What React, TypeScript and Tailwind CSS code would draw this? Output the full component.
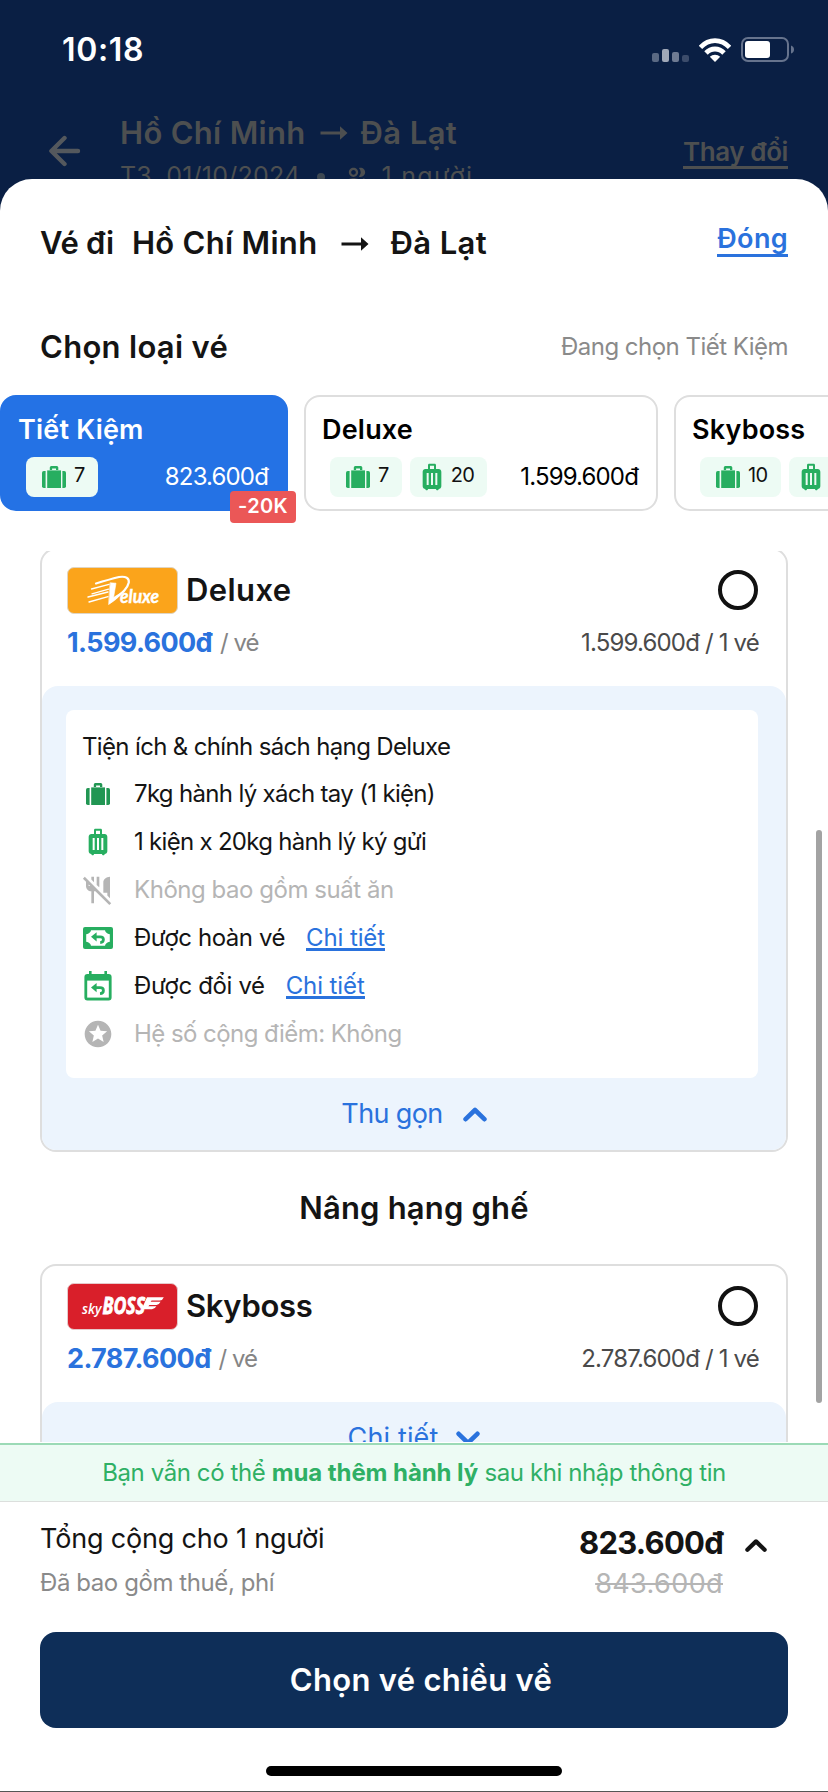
import type { ReactNode } from "react";
import { MdLuggage, MdNoMeals, MdOutlinePeopleAlt, MdStars } from "react-icons/md";

function RouteArrow() {
  return (
    <svg width="28" height="14" viewBox="0 0 28 14" fill="currentColor">
      <path d="M0.5 5.6H20V0.3L27.5 7L20 13.7V8.6H0.5Z" />
    </svg>
  );
}

function Chevron({ up = false, small = false }: { up?: boolean; small?: boolean }) {
  return (
    <svg
      width={small ? 22 : 24}
      height="15"
      viewBox="0 0 24 15"
      fill="none"
      stroke="currentColor"
      strokeWidth="4.6"
      strokeLinecap="round"
      strokeLinejoin="round"
    >
      <path d={up ? "M2.6 12.2L12 3L21.4 12.2" : "M2.6 2.8L12 12L21.4 2.8"} />
    </svg>
  );
}

function Suitcase() {
  return (
    <svg width="24" height="22" viewBox="0 0 24 22" fill="currentColor">
      <path d="M7.8 4V1.5Q7.8 0 9.3 0H14.8Q16.3 0 16.3 1.5V4H14V2.4H10.1V4Z" />
      <path d="M3.6 5V22H1.8Q0 22 0 20.2V6.8Q0 5 1.8 5Z" />
      <rect x="5.2" y="4.4" width="13.8" height="17.6" />
      <path d="M20.4 5H22.2Q24 5 24 6.8V20.2Q24 22 22.2 22H20.4Z" />
    </svg>
  );
}

function Refund() {
  return (
    <svg width="30" height="22" viewBox="0 0 30 22">
      <rect width="30" height="22" rx="2" fill="#27ae60" />
      <path
        d="M8 3.2H22Q22.6 6.4 26.8 7.2V14.8Q22.6 15.6 22 18.8H8Q7.4 15.6 3.2 14.8V7.2Q7.4 6.4 8 3.2Z"
        fill="#fff"
      />
      <path d="M8 9.8L13.6 5.2V14.4Z" fill="#27ae60" />
      <path d="M12.5 9.8H17.2Q20.4 9.8 20.4 12.6Q20.4 15.4 17.2 15.6" fill="none" stroke="#27ae60" strokeWidth="2.8" />
    </svg>
  );
}

function Reschedule() {
  return (
    <svg width="28" height="30" viewBox="0 0 28 30">
      <path
        d="M5 0H7.6V3H20.4V0H23V3H24.6Q27.6 3 27.6 6V26.4Q27.6 29.4 24.6 29.4H3.4Q0.4 29.4 0.4 26.4V6Q0.4 3 3.4 3H5Z"
        fill="#27ae60"
      />
      <rect x="3.2" y="9.6" width="21.6" height="17" fill="#fff" />
      <path d="M7 16.6L12.6 12V21.2Z" fill="#27ae60" />
      <path d="M11.5 16.6H16Q19.4 16.6 19.4 19.4Q19.4 22.4 16 22.6" fill="none" stroke="#27ae60" strokeWidth="2.8" />
    </svg>
  );
}

function DeluxeLogo() {
  return (
    <div className="w-[111px] h-[47px] rounded-[7px] border border-[#dfd5c4] bg-[#fba41b] overflow-hidden">
      <svg width="109" height="45" viewBox="1 1 109 45" fill="none" stroke="#fff" strokeLinecap="round">
        <path d="M29 16.5Q42 12.5 52 10Q62.5 8.6 61.8 15.5Q60 24 46 32.5" strokeWidth="2.2" />
        <path d="M43.3 15.8L49 16.2L46.6 30.4L56 24.6Q50 33 41.8 37.4Z" fill="#fff" strokeWidth="0.6" />
        <path d="M24.5 22L42 17.4M25 26.8L41.6 22.2M21 30L41 25M22 35L41 29.6" strokeWidth="1.3" />
        <text
          x="53"
          y="36.2"
          textLength="39"
          lengthAdjust="spacingAndGlyphs"
          className="font-['Lato'] font-bold italic text-[18.5px]"
          fill="#fff"
          strokeWidth="0.4"
        >
          eluxe
        </text>
      </svg>
    </div>
  );
}

function SkybossLogo() {
  return (
    <div className="w-[111px] h-[47px] rounded-[7px] border border-[#e6c9cb] bg-[#d91f2a] overflow-hidden">
      <svg width="109" height="45" viewBox="1 1 109 45" fill="#fff">
        <text
          x="15"
          y="31.3"
          textLength="19.5"
          lengthAdjust="spacingAndGlyphs"
          className="font-['Open_Sans'] font-semibold italic text-[15px]"
        >
          sky
        </text>
        <text
          x="35.5"
          y="31.3"
          textLength="42.5"
          lengthAdjust="spacingAndGlyphs"
          className="font-['Open_Sans'] font-bold italic text-[23.5px]"
          stroke="#fff"
          strokeWidth="0.9"
        >
          BOSS
        </text>
        <path d="M80 14.2H96.8Q95.8 17 92.8 17.6H84.6L83.6 18.8H93.6Q92.4 21.4 89.6 22H82.4L81.4 23.2H89.4Q88 25.8 85 26.2H74.6Z" />
      </svg>
    </div>
  );
}

function StatusBar() {
  return (
    <div className="h-[99px] pl-[62px] pr-[33px] flex items-center justify-between text-white">
      <span className="pt-px text-[32px] font-semibold tracking-[0.66px]">10:18</span>
      <div className="flex items-center gap-[10px]">
        <div className="flex items-end gap-[3px] h-[24px]">
          <div className="w-[7px] h-[9px] rounded-[2px] bg-[#5a6983]" />
          <div className="w-[7px] h-[13px] rounded-[2px] bg-[#a0a8b8]" />
          <div className="w-[7px] h-[10px] rounded-[2px] bg-[#6f7b93]" />
          <div className="w-[7px] h-[7px] rounded-[2px] bg-[#3c4c6b]" />
        </div>
        <svg width="32" height="24" viewBox="0 0 32 24" fill="none" stroke="#fff" strokeWidth="4.8">
          <path d="M1.4 9.4Q7.6 2.6 16 2.6T30.6 9.4" />
          <path d="M7 15Q10.8 11 16 11T25 15" />
          <path d="M16 24L10.8 18.8Q13 16.8 16 16.8T21.2 18.8Z" fill="#fff" stroke="none" />
        </svg>
        <svg width="54" height="25" viewBox="0 0 54 25">
          <rect x="1" y="1" width="46" height="23" rx="6" fill="none" stroke="#66738d" strokeWidth="2" />
          <rect x="4" y="4" width="25" height="17" rx="3" fill="#fff" />
          <path d="M50 8.5Q53 9.5 53 12.5T50 16.5Z" fill="#66738d" />
        </svg>
      </div>
    </div>
  );
}

function SearchHeader() {
  return (
    <div className="h-[80px] pl-[48px] pr-[40px] flex items-start overflow-hidden text-[#4d4f50] whitespace-nowrap">
      <svg
        className="mt-[36px]"
        width="34"
        height="32"
        viewBox="0 0 34 32"
        fill="none"
        stroke="#54585d"
        strokeWidth="4.4"
        strokeLinecap="round"
        strokeLinejoin="round"
      >
        <path d="M16.5 3L3.4 16L16.5 29M4 16H30" />
      </svg>
      <div className="ml-[38px] mt-[12px]">
        <div className="h-[44px] flex items-center text-[31px] font-semibold tracking-[0.3px]">
          <span>Hồ Chí Minh</span>
          <span className="ml-[14px] mr-[13px]">
            <RouteArrow />
          </span>
          <span className="tracking-[0.4px]">Đà Lạt</span>
        </div>
        <div className="h-[44px] flex items-center text-[25px]">
          <span className="tracking-[0.23px]">T3, 01/10/2024</span>
          <span className="ml-[17px] w-[8px] h-[8px] rounded-full bg-[#3d4853]" />
          <MdOutlinePeopleAlt className="ml-[18px]" size={28} />
          <span className="ml-[10px] tracking-[1.3px]">1 người</span>
        </div>
      </div>
      <span className="ml-auto mt-[39px] leading-[28px] border-b-[3px] border-[#4d4f50] text-[26px] font-semibold tracking-[-0.4px]">
        Thay đổi
      </span>
    </div>
  );
}

function Bag({ kind, kg }: { kind: "carry" | "checked"; kg: number }) {
  return (
    <div
      className={
        kind === "carry"
          ? "h-[40px] pl-4 pr-[13px] flex items-center gap-2 rounded-lg bg-[#edfbf4] text-[#27ae60]"
          : "h-[40px] pl-[6px] pr-[13px] flex items-center gap-[3px] rounded-lg bg-[#edfbf4] text-[#27ae60]"
      }
    >
      {kind === "carry" ? <Suitcase /> : <MdLuggage size={32} />}
      <span className="pb-[4px] text-[20px] text-[#111] tracking-[-0.6px]">{kg}</span>
    </div>
  );
}

type Fare = {
  name: string;
  price?: string;
  carry: number;
  checked?: number;
  discount?: string;
  width: string;
};

const fares: Fare[] = [
  { name: "Tiết Kiệm", price: "823.600đ", carry: 7, discount: "-20K", width: "w-[288px]" },
  { name: "Deluxe", price: "1.599.600đ", carry: 7, checked: 20, width: "w-[354px]" },
  { name: "Skyboss", carry: 10, checked: 30, width: "w-[364px]" },
];

function FareTab({ fare, active }: { fare: Fare; active: boolean }) {
  return (
    <div
      className={`${fare.width} relative shrink-0 h-[116px] rounded-2xl border-2 pl-4 pt-[13px] pr-[18px] ${
        active ? "bg-[#2472e5] border-[#2472e5] text-white" : "bg-white border-[#dedede] text-black"
      }`}
    >
      <div className="leading-[40px] text-[27px] font-semibold tracking-[0.2px]">{fare.name}</div>
      <div className="mt-[7px] ml-2 flex items-center gap-2">
        <Bag kind="carry" kg={fare.carry} />
        {fare.checked && <Bag kind="checked" kg={fare.checked} />}
        <span className="ml-auto text-[24px] leading-[38px] pb-px tracking-[-0.85px]">{fare.price}</span>
      </div>
      {fare.discount && (
        <span className="absolute right-[-10px] bottom-[-14px] w-[66px] h-[32px] leading-[31px] text-center rounded-[4px] bg-[#eb5757] text-white text-[20px] font-semibold tracking-[0.4px]">
          {fare.discount}
        </span>
      )}
    </div>
  );
}

function DetailLink() {
  return (
    <span className="mt-[3px] h-[23px] leading-[20px] border-b-[3px] border-[#2a72dd] text-[#2a72dd] tracking-[-0.1px]">
      Chi tiết
    </span>
  );
}

function Perk({ icon, muted, children }: { icon: ReactNode; muted?: boolean; children: ReactNode }) {
  return (
    <div className={`h-[48px] flex items-center ${muted ? "text-[#b5b5b5]" : "text-[#141414]"}`}>
      <span className="w-[32px] mr-5 flex justify-center">{icon}</span>
      {children}
    </div>
  );
}

function FareCard({ logo, name, price, children }: { logo: ReactNode; name: ReactNode; price: string; children: ReactNode }) {
  return (
    <div className="shrink-0 rounded-2xl border-2 border-[#dedede] overflow-hidden whitespace-nowrap">
      <div className="h-[136px] pt-4 pl-[25px] pr-[28px]">
        <div className="h-[48px] flex items-center">
          {logo}
          <span className="ml-2 text-[31px] font-semibold text-[#141414]">{name}</span>
          <span className="ml-auto w-[40px] h-[40px] rounded-full border-4 border-[#111]" />
        </div>
        <div className="mt-[9px] h-[40px] flex items-center text-[24px]">
          <span className="text-[27px] font-bold text-[#2a72dd] tracking-[-0.62px]">{price}</span>
          <span className="ml-2 text-[#858585] tracking-[-1px]">/ vé</span>
          <span className="ml-auto -mr-px text-[#4a4a4a] tracking-[-0.82px]">{price} / 1 vé</span>
        </div>
      </div>
      <div className="rounded-t-2xl bg-[#ecf4fd]">{children}</div>
    </div>
  );
}

export default function App() {
  return (
    <div className="w-[828px] h-[1792px] flex flex-col overflow-hidden bg-[#0a1f44] font-['Inter',sans-serif]">
      <StatusBar />
      <SearchHeader />

      <div className="flex-1 flex flex-col rounded-t-[32px] bg-white overflow-hidden whitespace-nowrap">
        <div className="h-[127px] shrink-0 px-[40px] flex items-start justify-between">
          <div className="h-[129px] flex items-center text-[31px] font-semibold text-[#141414]">
            <span className="tracking-[-0.3px]">Vé đi</span>
            <span className="ml-[18px] tracking-[0.3px]">Hồ Chí Minh</span>
            <span className="ml-[24px] mr-[21px]">
              <RouteArrow />
            </span>
            <span className="tracking-[0.4px]">Đà Lạt</span>
          </div>
          <span className="mt-[45px] leading-[30px] border-b-[3px] border-[#2a72dd] text-[#2a72dd] text-[27px] font-semibold tracking-[0.35px]">
            Đóng
          </span>
        </div>

        <div className="h-[81px] shrink-0 px-[40px] flex items-center justify-between">
          <h2 className="pt-px text-[31px] font-semibold text-[#141414] tracking-[0.3px]">Chọn loại vé</h2>
          <span className="text-[24px] text-[#8a8a8a] tracking-[-0.52px]">Đang chọn Tiết Kiệm</span>
        </div>

        <div className="mt-2 h-[156px] shrink-0 flex gap-4 overflow-hidden">
          {fares.map((fare, i) => (
            <FareTab key={fare.name} fare={fare} active={i === 0} />
          ))}
        </div>

        {/* scrolled fare list */}
        <div className="relative h-[891px] mb-px shrink-0 overflow-hidden">
          <div className="-mt-[3px] px-[40px] flex flex-col">
            <FareCard
              logo={<DeluxeLogo />}
              name={<span className="tracking-[0.4px]">Deluxe</span>}
              price="1.599.600đ"
            >
              <div className="pt-6 pl-6 pr-[28px]">
                <div className="h-[368px] pt-3 pl-4 rounded-lg bg-white text-[24px]">
                  <div className="leading-[49px] h-[48px] text-[#141414] tracking-[-0.65px]">
                    Tiện ích &amp; chính sách hạng Deluxe
                  </div>
                  <Perk icon={<span className="text-[#219653]"><Suitcase /></span>}>
                    <span className="tracking-[-0.67px]">7kg hành lý xách tay (1 kiện)</span>
                  </Perk>
                  <Perk icon={<MdLuggage size={32} color="#27ae60" />}>
                    <span className="tracking-[-0.71px]">1 kiện x 20kg hành lý ký gửi</span>
                  </Perk>
                  <Perk muted icon={<MdNoMeals size={32} />}>
                    <span className="tracking-[-0.46px]">Không bao gồm suất ăn</span>
                  </Perk>
                  <Perk icon={<Refund />}>
                    <span className="mr-[21px] tracking-[-0.45px]">Được hoàn vé</span>
                    <DetailLink />
                  </Perk>
                  <Perk icon={<Reschedule />}>
                    <span className="mr-[21px] tracking-[-0.38px]">Được đổi vé</span>
                    <DetailLink />
                  </Perk>
                  <Perk muted icon={<MdStars size={32} />}>
                    <span className="tracking-[-0.55px]">Hệ số cộng điểm: Không</span>
                  </Perk>
                </div>
              </div>
              <div className="h-[72px] flex items-center justify-center gap-[20px] text-[#2a72dd] text-[27px] tracking-[-0.62px]">
                Thu gọn
                <Chevron up />
              </div>
            </FareCard>

            <h2 className="h-[112px] leading-[112px] text-center text-[31px] font-semibold text-[#141414] tracking-[0.18px]">
              Nâng hạng ghế
            </h2>

            <FareCard
              logo={<SkybossLogo />}
              name={<span className="tracking-[-0.3px]">Skyboss</span>}
              price="2.787.600đ"
            >
              <div className="h-[72px] flex items-center justify-center gap-[18px] text-[#2a72dd] text-[27px] tracking-[0.15px]">
                Chi tiết
                <Chevron />
              </div>
            </FareCard>
          </div>
          <div className="absolute right-[6px] top-[279px] w-[6px] h-[573px] rounded-full bg-[#a3a3a3]" />
        </div>

        <div className="h-[59px] shrink-0 border-t-2 border-t-[#9bdab6] border-b border-b-[#dcdfdd] bg-[#edfbf4] text-center leading-[56px] text-[24px] text-[#2fb065] tracking-[-0.4px]">
          Bạn vẫn có thể <b className="tracking-[-0.09px]">mua thêm hành lý</b> sau khi nhập thông tin
        </div>

        <div className="h-[130px] shrink-0 px-[40px] flex justify-between">
          <div className="pt-[15px]">
            <div className="leading-[44px] text-[27px] text-[#141414] tracking-[-0.18px]">Tổng cộng cho 1 người</div>
            <div className="leading-[43px] text-[24px] text-[#8a8a8a] tracking-[-0.42px]">Đã bao gồm thuế, phí</div>
          </div>
          <div className="pt-[20px] pr-[21px] flex gap-[22px] text-[#141414]">
            <div className="text-right">
              <div className="leading-[42px] text-[31px] font-bold tracking-[-0.75px]">823.600đ</div>
              <div className="leading-[40px] text-[27px] text-[#b5b5b5] line-through tracking-[0.4px]">843.600đ</div>
            </div>
            <div className="mt-[16px]">
              <Chevron up small />
            </div>
          </div>
        </div>

        <button className="mx-[40px] pl-[14px] h-[96px] shrink-0 rounded-2xl bg-[#0e2e58] text-white text-[31px] font-semibold tracking-[0.3px]">
          Chọn vé chiều về
        </button>
        <div className="mx-auto mt-[38px] w-[296px] h-[10px] shrink-0 rounded-full bg-black" />
        <div className="mt-auto h-px shrink-0 bg-[#555]" />
      </div>
    </div>
  );
}
